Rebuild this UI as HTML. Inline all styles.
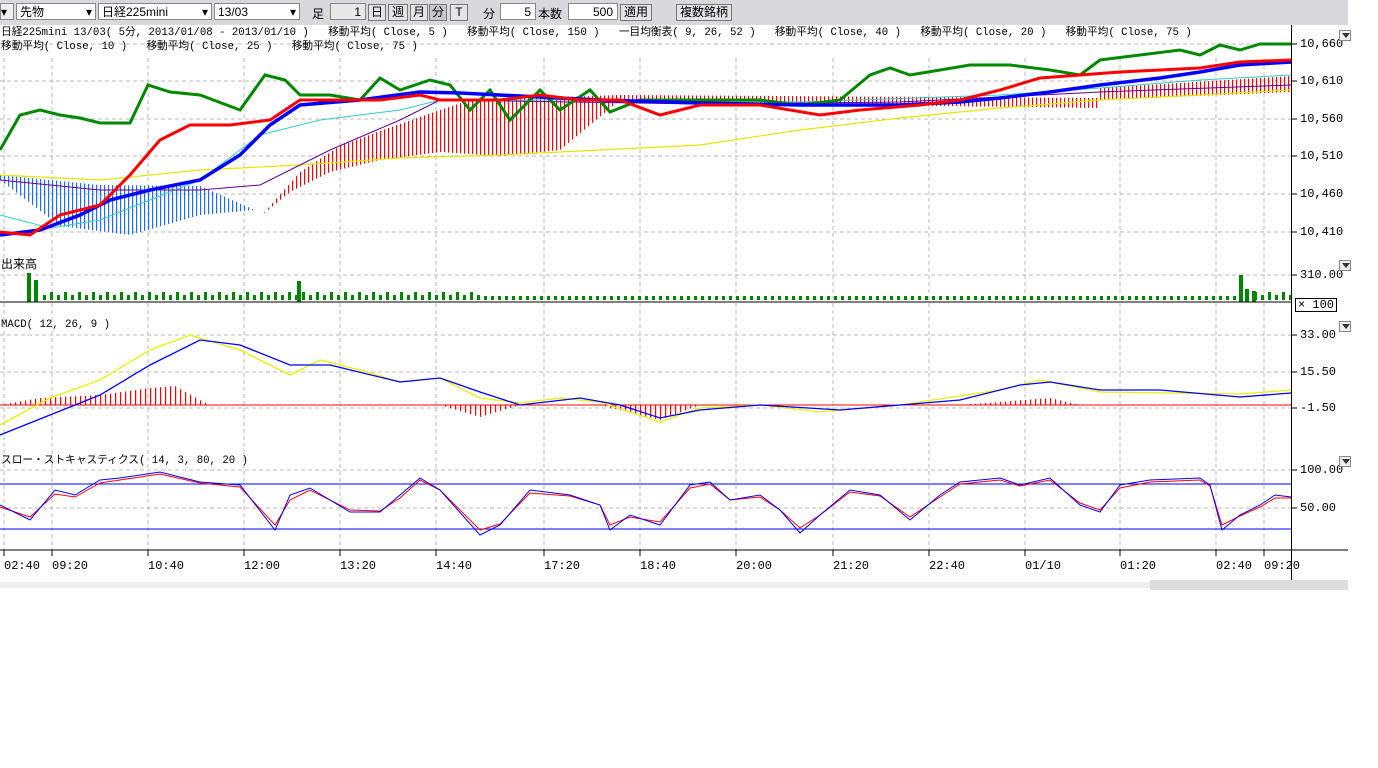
<!DOCTYPE html>
<html><head><meta charset="utf-8">
<style>
body{margin:0;width:1378px;height:768px;background:#fff;position:relative;overflow:hidden;font-family:"Liberation Mono","Noto Sans CJK JP",monospace;}
.tb{position:absolute;left:0;top:0;width:1348px;height:25px;background:#d9d9dd;}
.b{position:absolute;top:3px;height:17px;background:#fff;border:1px solid #888;font-size:12px;line-height:17px;box-sizing:border-box;padding-left:3px;font-family:"Liberation Sans","Noto Sans CJK JP",sans-serif;}
.btn{position:absolute;top:4px;height:17px;background:#e4e4e8;border:1px solid #777;font-size:12px;line-height:15px;text-align:center;box-sizing:border-box;font-family:"Liberation Sans","Noto Sans CJK JP",sans-serif;}
.t{position:absolute;font-size:10.7px;white-space:pre;color:#000;line-height:12px;}
.l{position:absolute;font-size:12px;font-family:"Liberation Sans","Noto Sans CJK JP",sans-serif;top:5px;}
.dd{position:absolute;width:12px;height:11px;border:1px solid #888;background:#eee;box-sizing:border-box;}
.dd:after{content:"";position:absolute;left:2px;top:2px;border-left:4px solid transparent;border-right:4px solid transparent;border-top:5px solid #333;}
</style></head><body>
<div class="tb"></div>
<div class="b" style="left:0;width:14px;padding:0;background:#eee">▾</div>
<div class="b" style="left:16px;width:80px">先物<span style="position:absolute;right:3px">▾</span></div>
<div class="b" style="left:98px;width:114px">日経225mini<span style="position:absolute;right:3px">▾</span></div>
<div class="b" style="left:214px;width:86px">13/03<span style="position:absolute;right:3px">▾</span></div>
<div class="l" style="left:312px">足</div>
<div class="b" style="left:330px;width:36px;text-align:right;padding-right:4px;background:#e8e8e8">1</div>
<div class="btn" style="left:368px;width:18px">日</div>
<div class="btn" style="left:388px;width:20px">週</div>
<div class="btn" style="left:410px;width:18px">月</div>
<div class="btn" style="left:429px;width:18px;background:#c8c8cc">分</div>
<div class="btn" style="left:450px;width:18px">T</div>
<div class="l" style="left:483px">分</div>
<div class="b" style="left:500px;width:36px;text-align:right;padding-right:4px">5</div>
<div class="l" style="left:538px">本数</div>
<div class="b" style="left:568px;width:50px;text-align:right;padding-right:4px">500</div>
<div class="btn" style="left:620px;width:32px">適用</div>
<div class="btn" style="left:676px;width:56px">複数銘柄</div>

<svg style="position:absolute;left:0;top:0" width="1378" height="600">
<defs>
<pattern id="rs" width="4" height="10" patternUnits="userSpaceOnUse"><rect x="0" width="1.2" height="10" fill="#f00"/></pattern>
<pattern id="bs" width="4" height="10" patternUnits="userSpaceOnUse"><rect x="0" width="1.2" height="10" fill="#1e6cff"/></pattern>
<pattern id="gv" width="14" height="10" patternUnits="userSpaceOnUse"><rect x="1" y="5" width="3" height="5" fill="#080"/><rect x="8" y="2" width="3" height="8" fill="#080"/></pattern>
<pattern id="rh" width="5" height="10" patternUnits="userSpaceOnUse"><rect x="0" width="1.2" height="10" fill="#f00"/></pattern>
</defs>
<g stroke="#bbb" stroke-dasharray="4,3" stroke-width="1">
<path d="M4 58V550M52 58V550M148 58V550M244 58V550M340 58V550M436 58V550M544 58V550M640 58V550M736 58V550M833 58V550M929 58V550M1025 58V550M1120 58V550M1216 58V550M1264 58V550"/>
<path d="M0 44H1291M0 81H1291M0 119H1291M0 156H1291M0 194H1291M0 232H1291M0 275H1291M0 335H1291M0 372H1291M0 408H1291M0 470H1291M0 508H1291"/>
</g>
<polygon points="0,175 100,185 200,186 255,210 200,215 130,235 60,226 0,180" fill="url(#bs)"/>
<polygon points="262,215 300,172 340,146 380,131 440,110 470,100 620,95 620,100 560,150 500,156 440,152 380,160 330,172 290,192" fill="url(#rs)"/>
<polygon points="620,95 1100,98 1100,108 620,102" fill="url(#rs)"/>
<polygon points="1100,88 1291,76 1291,92 1100,100" fill="url(#rs)"/>
<g fill="none">
<polyline stroke="#e5e500" stroke-width="1.2" points="0,175 100,180 200,170 300,165 400,158 500,155 600,150 700,145 800,130 900,118 1000,108 1100,100 1200,95 1291,90"/>
<polyline stroke="#3cc" stroke-width="1" points="0,215 50,228 100,220 200,180 260,135 320,120 400,110 440,100 600,100 800,102 1000,95 1100,88 1200,80 1291,75"/>
<polyline stroke="#609" stroke-width="1" points="0,180 100,190 200,190 260,185 330,150 400,120 440,100 700,104 900,102 1100,92 1291,85"/>
<polyline stroke="#080" stroke-width="3" points="0,150 20,115 40,110 60,115 80,118 100,123 130,123 148,85 170,92 200,95 240,110 265,75 285,80 300,95 330,95 360,100 380,78 400,90 430,80 450,85 470,110 490,90 510,120 540,90 560,110 590,90 610,112 640,100 680,100 720,100 760,100 800,105 840,100 870,75 890,68 910,75 940,70 970,65 1010,65 1050,70 1080,75 1100,60 1140,55 1180,50 1200,55 1220,45 1240,50 1260,44 1291,44"/>
<polyline stroke="#00f" stroke-width="3.5" points="0,235 40,230 80,215 110,200 150,190 200,180 240,155 270,125 300,105 360,100 420,92 460,93 600,100 700,103 800,105 900,105 960,102 1000,98 1050,92 1100,85 1160,78 1200,72 1240,65 1291,62"/>
<polyline stroke="#f00" stroke-width="3" points="0,232 30,235 60,215 100,205 130,175 160,140 190,125 230,125 270,120 300,100 340,100 380,100 420,95 440,100 460,100 500,100 540,95 580,100 620,100 660,115 700,105 760,105 820,115 860,110 920,105 960,100 1000,90 1040,78 1080,75 1120,72 1160,70 1200,68 1240,62 1291,60"/>
</g>
<rect x="40" y="292" width="440" height="10" fill="url(#gv)"/>
<rect x="480" y="296" width="760" height="6" fill="url(#gv)"/>
<rect x="1250" y="292" width="41" height="10" fill="url(#gv)"/>
<rect x="27" y="273" width="4" height="29" fill="#080"/><rect x="34" y="280" width="4" height="22" fill="#080"/><rect x="297" y="281" width="4" height="21" fill="#080"/><rect x="1239" y="275" width="4" height="27" fill="#080"/><rect x="1245" y="289" width="4" height="13" fill="#080"/><rect x="1252" y="291" width="4" height="11" fill="#080"/>
<line x1="0" y1="302" x2="1291" y2="302" stroke="#000"/>
<polygon points="0,405 40,398 100,395 150,388 175,386 200,400 210,405" fill="url(#rh)"/>
<polygon points="300,405 440,405 480,417 520,405" fill="url(#rh)"/>
<polygon points="600,405 660,420 700,405 740,405" fill="url(#rh)"/>
<polygon points="960,405 1050,398 1080,405" fill="url(#rh)"/>
<line x1="0" y1="405" x2="1291" y2="405" stroke="#f00" stroke-width="1"/>
<polyline fill="none" stroke="#ee0" stroke-width="1.3" points="0,425 50,398 100,380 150,350 190,335 240,350 290,375 320,360 360,370 400,382 440,378 480,398 520,403 560,398 600,402 660,422 700,408 760,405 820,412 900,405 1000,390 1040,380 1100,392 1240,394 1291,390"/>
<polyline fill="none" stroke="#00f" stroke-width="1.3" points="0,435 50,415 100,395 150,365 200,340 240,345 290,365 330,365 400,382 440,378 480,392 520,405 580,398 620,405 660,418 700,410 760,405 840,410 900,405 960,400 1020,385 1050,382 1100,390 1160,390 1240,397 1291,393"/>
<line x1="0" y1="484" x2="1291" y2="484" stroke="#00f"/><line x1="0" y1="529" x2="1291" y2="529" stroke="#00f"/>
<polyline fill="none" stroke="#f00" stroke-width="1" points="0,507 30,517 55,494 75,497 100,483 120,480 160,474 200,483 240,487 275,525 290,500 310,490 350,510 380,511 400,498 420,480 440,490 480,530 500,524 530,493 570,496 600,505 610,525 630,517 660,522 690,488 710,484 730,500 760,497 780,510 800,528 820,515 850,492 880,496 910,517 940,497 960,484 1000,480 1020,486 1050,480 1080,503 1100,510 1120,488 1150,482 1200,480 1210,486 1222,525 1240,516 1260,507 1275,498 1291,498"/>
<polyline fill="none" stroke="#00f" stroke-width="1" points="0,505 30,520 55,490 75,495 100,480 120,478 160,472 200,482 240,485 275,530 290,495 310,488 350,512 380,512 400,495 420,478 440,490 480,535 500,525 530,490 570,495 600,505 610,530 630,515 660,525 690,485 710,482 730,500 760,495 780,510 800,533 820,515 850,490 880,495 910,520 940,495 960,482 1000,478 1020,485 1050,478 1080,505 1100,512 1120,485 1150,480 1200,478 1210,485 1222,530 1240,515 1260,505 1275,495 1291,497"/>
<line x1="0" y1="550" x2="1348" y2="550" stroke="#000"/>
<line x1="1291.5" y1="25" x2="1291.5" y2="590" stroke="#000"/>
<g stroke="#000"><path d="M4 550v6M52 550v6M148 550v6M244 550v6M340 550v6M436 550v6M544 550v6M640 550v6M736 550v6M833 550v6M929 550v6M1025 550v6M1120 550v6M1216 550v6M1264 550v6"/>
<path d="M1291 44h6M1291 81h6M1291 119h6M1291 156h6M1291 194h6M1291 232h6M1291 275h6M1291 335h6M1291 372h6M1291 408h6M1291 470h6M1291 508h6"/></g>
<rect x="0" y="582" width="1150" height="6" fill="#eee"/>
<rect x="1150" y="580" width="198" height="10" fill="#ddd"/>
</svg>
<div class="t" style="left:1px;top:27px">日経225mini 13/03( 5分, 2013/01/08 - 2013/01/10 )   移動平均( Close, 5 )   移動平均( Close, 150 )   一目均衡表( 9, 26, 52 )   移動平均( Close, 40 )   移動平均( Close, 20 )   移動平均( Close, 75 )</div>
<div class="t" style="left:1px;top:41px">移動平均( Close, 10 )   移動平均( Close, 25 )   移動平均( Close, 75 )</div>
<div class="t" style="left:1px;top:259px;font-size:12px">出来高</div>
<div class="t" style="left:1px;top:319px">MACD( 12, 26, 9 )</div>
<div class="t" style="left:1px;top:455px">スロー・ストキャスティクス( 14, 3, 80, 20 )</div>
<div class="t" style="left:1300px;top:38px;font-size:12px">10,660</div>
<div class="t" style="left:1300px;top:75px;font-size:12px">10,610</div>
<div class="t" style="left:1300px;top:113px;font-size:12px">10,560</div>
<div class="t" style="left:1300px;top:150px;font-size:12px">10,510</div>
<div class="t" style="left:1300px;top:188px;font-size:12px">10,460</div>
<div class="t" style="left:1300px;top:226px;font-size:12px">10,410</div>
<div class="t" style="left:1300px;top:269px;font-size:12px">310.00</div>
<div class="t" style="left:1295px;top:298px;font-size:12px;border:1px solid #000;padding:0 2px">× 100</div>
<div class="t" style="left:1300px;top:329px;font-size:12px">33.00</div>
<div class="t" style="left:1300px;top:366px;font-size:12px">15.50</div>
<div class="t" style="left:1300px;top:402px;font-size:12px">-1.50</div>
<div class="t" style="left:1300px;top:464px;font-size:12px">100.00</div>
<div class="t" style="left:1300px;top:502px;font-size:12px">50.00</div>
<div class="dd" style="left:1339px;top:30px"></div>
<div class="dd" style="left:1339px;top:260px"></div>
<div class="dd" style="left:1339px;top:321px"></div>
<div class="dd" style="left:1339px;top:456px"></div>
<div class="t" style="left:4px;top:560px;font-size:12px">02:40</div>
<div class="t" style="left:52px;top:560px;font-size:12px">09:20</div>
<div class="t" style="left:148px;top:560px;font-size:12px">10:40</div>
<div class="t" style="left:244px;top:560px;font-size:12px">12:00</div>
<div class="t" style="left:340px;top:560px;font-size:12px">13:20</div>
<div class="t" style="left:436px;top:560px;font-size:12px">14:40</div>
<div class="t" style="left:544px;top:560px;font-size:12px">17:20</div>
<div class="t" style="left:640px;top:560px;font-size:12px">18:40</div>
<div class="t" style="left:736px;top:560px;font-size:12px">20:00</div>
<div class="t" style="left:833px;top:560px;font-size:12px">21:20</div>
<div class="t" style="left:929px;top:560px;font-size:12px">22:40</div>
<div class="t" style="left:1025px;top:560px;font-size:12px">01/10</div>
<div class="t" style="left:1120px;top:560px;font-size:12px">01:20</div>
<div class="t" style="left:1216px;top:560px;font-size:12px">02:40</div>
<div class="t" style="left:1264px;top:560px;font-size:12px">09:20</div>
</body></html>
